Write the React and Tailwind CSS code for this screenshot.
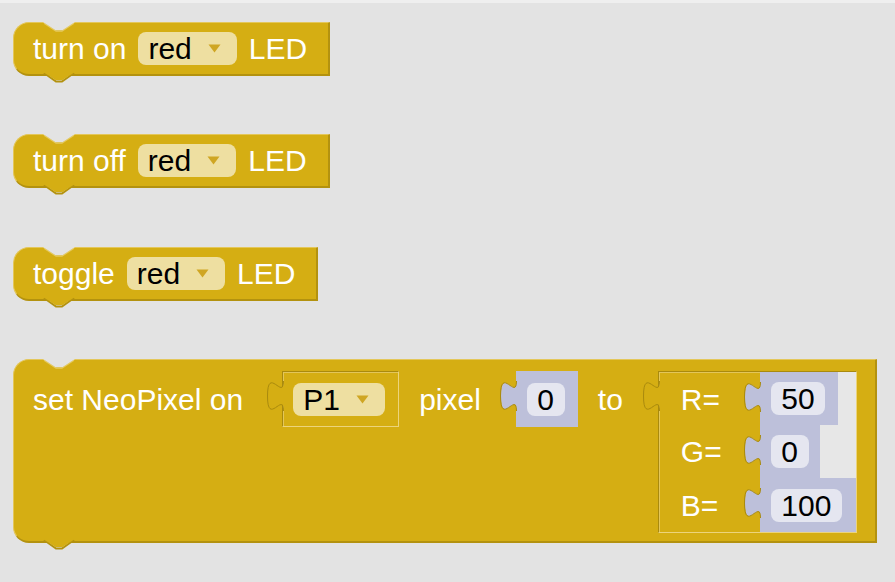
import React from "react";

// block colours
const YELLOW = "#d5ae13";
const BG = "#e3e3e3";

const TopNotch = () => (
  <svg
    className="absolute left-[29px] top-[-1px]"
    width="32"
    height="10"
    viewBox="0 0 32 10"
    overflow="visible"
  >
    <path d="M1 1.2 L13 9.2 L19 9.2 L31 1.2" fill="none" stroke="#e6ca5e" strokeWidth="1.2" />
    <path d="M0 0 L12.5 8.3 L19.5 8.3 L32 0 Z" fill={BG} />
  </svg>
);

const BottomTab = () => (
  <svg
    className="absolute left-[29px] top-[calc(100%-2px)]"
    width="32"
    height="11"
    viewBox="0 0 32 11"
    overflow="visible"
  >
    <path d="M1 1 L13 9.5 L19 9.5 L31 1" fill="none" stroke="#b3920f" strokeWidth="2" />
    <path d="M0 0 L12.5 8 L19.5 8 L32 0 Z" fill={YELLOW} />
  </svg>
);

// puzzle tab sticking out on the left of an input
const Tab = ({ fill, className }) => (
  <svg className={className} width="18" height="30" viewBox="0 0 18 30" overflow="visible">
    <path d="M18 0 C18 20 2 -16 2 15 C2 46 18 10 18 30 Z" fill={fill} />
    <path
      d="M17.5 0 C17.5 20 1.5 -16 1.5 15 C1.5 46 17.5 10 17.5 30"
      fill="none"
      stroke="#a98a0e"
      strokeWidth="1"
    />
  </svg>
);

const Block = ({ className = "", children }) => (
  <div
    className={
      "relative self-start rounded-l-[16px] border-t border-l border-r-2 border-b-2 border-t-[#e4c75a] border-l-[#e4c75a] border-r-[#b3920f] border-b-[#b3920f] bg-[#d5ae13] text-white " +
      className
    }
  >
    <TopNotch />
    {children}
    <BottomTab />
  </div>
);

const Dropdown = ({ label }) => (
  <div className="flex h-[33px] items-center rounded-[8px] bg-[#eedfa1] pl-[10px] pr-[16px] text-black">
    <span>{label}</span>
    <svg className="ml-[16px]" width="13" height="9" viewBox="0 0 13 9">
      <path d="M0.5 0.5 H12.5 L6.5 8.5 Z" fill="#cfa623" />
    </svg>
  </div>
);

const Field = ({ value }) => (
  <div className="flex h-[33px] items-center rounded-[8px] bg-[#e5e6f0] px-[10.5px] text-black">
    {value}
  </div>
);

const ValueBlock = ({ value, className = "" }) => (
  <div className={"relative flex items-center bg-[#bdc0da] pl-[11px] " + className}>
    <Tab fill="#bdc0da" className="absolute left-[-17px] top-[10px]" />
    <Field value={value} />
  </div>
);

const LedBlock = ({ verb, className }) => (
  <Block className={className}>
    <div className="flex items-center gap-[12px] py-[9px] pl-[19px] pr-[21px]">
      <span>{verb}</span>
      <Dropdown label="red" />
      <span>LED</span>
    </div>
  </Block>
);

const holeEdges =
  "relative border border-t-[#a98a0e] border-l-[#a98a0e] border-b-[#ecd47c] border-r-[#ecd47c]";

export default function App() {
  return (
    <div className="h-[582px] w-[895px] overflow-hidden bg-[#e3e3e3] font-['Liberation_Sans',Arial,sans-serif] text-[30px] leading-[33px]">
      <div className="h-[3px] bg-[#efefef]" />
      <div className="flex flex-col pl-[13px] pt-[19px]">
        <LedBlock verb="turn on" />
        <LedBlock verb="turn off" className="mt-[58px]" />
        <LedBlock verb="toggle" className="mt-[59px]" />

        {/* set NeoPixel */}
        <Block className="mt-[58px]">
          <div className="flex items-start pt-[11px] pb-[8px] pl-[19px] pr-[18px]">
            <span className="flex h-[56px] items-center">set NeoPixel on</span>

            <div className={holeEdges + " ml-[39px] h-[56px] w-[117px]"}>
              <Tab fill={YELLOW} className="absolute left-[-17px] top-[9px]" />
              <div className="flex h-full items-center border-t border-l border-[#e3c65a] pl-[9px]">
                <Dropdown label="P1" />
              </div>
            </div>

            <span className="ml-[20px] flex h-[56px] items-center">pixel</span>
            <ValueBlock value="0" className="ml-[35px] h-[56px] w-[62px]" />
            <span className="ml-[20px] flex h-[56px] items-center">to</span>

            <div className={holeEdges + " ml-[35px] flex h-[162px] w-[199px]"}>
              <Tab fill={YELLOW} className="absolute left-[-17px] top-[9px]" />
              <div className="flex w-[101px] flex-col border-t border-l border-[#e3c65a] pl-[21px]">
                <span className="flex h-[52px] items-center">R=</span>
                <span className="flex h-[53px] items-center">G=</span>
                <span className="flex h-[54px] items-center">B=</span>
              </div>
              <div className="flex flex-1 flex-col bg-[#e7e7e7]">
                <ValueBlock value="50" className="h-[53px] w-[78px]" />
                <ValueBlock value="0" className="h-[53px] w-[60px]" />
                <ValueBlock value="100" className="h-[54px] w-[96px]" />
              </div>
            </div>
          </div>
        </Block>
      </div>
    </div>
  );
}
